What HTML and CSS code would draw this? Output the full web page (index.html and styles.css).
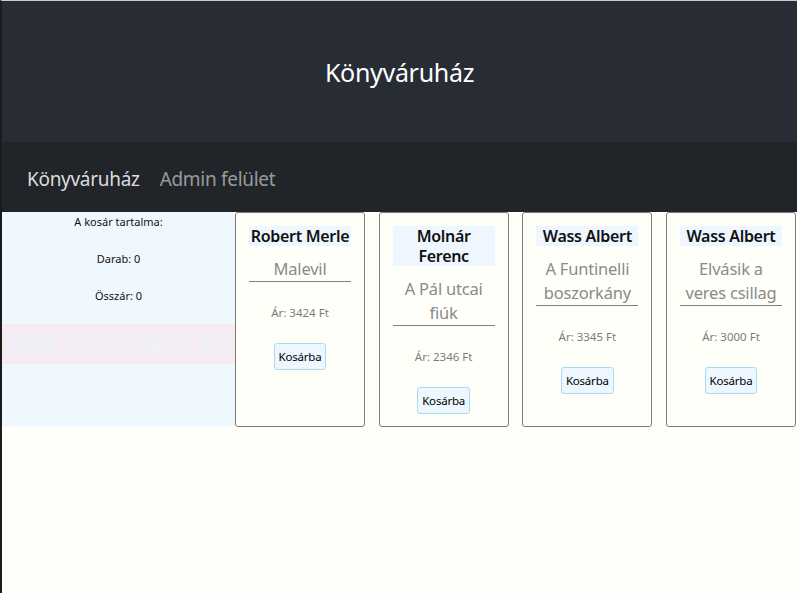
FILE: index.html
```html
<!DOCTYPE html>
<html lang="hu">
<head>
<meta charset="utf-8">
<title>Könyváruház</title>
<link rel="stylesheet" href="styles.css">
</head>
<body>
<div class="app">
  <header class="app-header"><h1 class="app-title">Könyváruház</h1></header>
  <nav class="navbar">
    <a class="nav-brand" href="#">Könyváruház</a>
    <a class="nav-link" href="#">Admin felület</a>
  </nav>
  <main class="shop">
    <aside class="cart">
      <div class="cart-line">A kosár tartalma:</div>
      <div class="cart-line">Darab: 0</div>
      <div class="cart-line">Összár: 0</div>
      <table class="cart-table">
        <tr>
          <th class="c1">Szerzők</th><th class="c2">Cím</th><th class="c3">Ár</th><th class="c4">Db</th><th class="c5"></th><th class="c6"></th><th class="c7"></th>
        </tr>
      </table>
    </aside>
    <section class="cards">
      <article class="card">
        <h3 class="author">Robert Merle</h3>
        <div class="title">Malevil</div>
        <p class="price">Ár: 3424 Ft</p>
        <button class="buy">Kosárba</button>
      </article>
      <article class="card">
        <h3 class="author">Molnár Ferenc</h3>
        <div class="title">A Pál utcai fiúk</div>
        <p class="price">Ár: 2346 Ft</p>
        <button class="buy">Kosárba</button>
      </article>
      <article class="card">
        <h3 class="author">Wass Albert</h3>
        <div class="title">A Funtinelli boszorkány</div>
        <p class="price">Ár: 3345 Ft</p>
        <button class="buy">Kosárba</button>
      </article>
      <article class="card">
        <h3 class="author">Wass Albert</h3>
        <div class="title">Elvásik a veres csillag</div>
        <p class="price">Ár: 3000 Ft</p>
        <button class="buy">Kosárba</button>
      </article>
    </section>
  </main>
</div>
</body>
</html>
```
FILE: styles.css
```css
html, body {
  margin: 0;
  padding: 0;
}
body {
  background: #fffffa;
  font-family: "Segoe UI", "Noto Sans", "Open Sans", sans-serif;
  border-top: 1px solid #c9c9c9;
  border-left: 2px solid #1c1a1a;
  min-height: 593px;
  box-sizing: border-box;
}
.app-header {
  background: #282c34;
  height: 141px;
  display: flex;
  align-items: center;
  justify-content: center;
}
.app-title {
  margin: 0;
  color: #fff;
  font-weight: 400;
  font-size: 25px;
  letter-spacing: -0.3px;
}
.navbar {
  background: #212529;
  height: 70px;
  box-sizing: border-box;
  padding-top: 3px;
  display: flex;
  align-items: center;
  padding-left: 25px;
  gap: 20px;
}
.nav-brand, .nav-link {
  text-decoration: none;
  font-size: 19px;
  letter-spacing: -0.3px;
}
.nav-brand { color: rgba(255,255,255,0.85); }
.nav-link { color: rgba(255,255,255,0.55); }
.shop {
  display: flex;
  align-items: stretch;
}
.cart {
  width: 233px;
  background: #f0f8ff;
  padding-top: 2px;
  height: 213px;
  flex: none;
}
.cart-line {
  font-size: 11px;
  line-height: 15px;
  text-align: center;
  color: #111;
  margin-bottom: 22px;
}
.cart-table {
  width: 100%;
  border-collapse: collapse;
  background: #f3eef5;
  margin-top: -1px;
}
.cart-table th {
  height: 36px;
  border: 2px solid #fce9ea;
  color: #eef6fb;
  font-weight: 400;
  font-size: 11px;
  padding: 0;
}
.c1 { width: 58px; }
.c2 { width: 38px; }
.c3 { width: 31px; }
.c4 { width: 33px; }
.c5 { width: 20px; }
.c6 { width: 19px; }
.cards {
  flex: 1;
  display: flex;
  gap: 13.7px;
  padding-right: 1px;
}
.card {
  flex: 1;
  border: 1px solid #7a7a7a;
  border-radius: 3px;
  padding: 13px 13px 0;
  text-align: center;
  min-width: 0;
}
.author {
  margin: 0;
  background: #eef7ff;
  font-size: 16px;
  line-height: 20px;
  font-weight: 600;
  color: #111;
  letter-spacing: -0.3px;
}
.title {
  margin-top: 11px;
  font-size: 16.5px;
  line-height: 24px;
  color: #8a8a8a;
  border-bottom: 1px solid #7f7f7f;
  letter-spacing: -0.2px;
}
.price {
  margin: 23px 0 22px;
  font-size: 11.5px;
  line-height: 16px;
  color: #7b7b7b;
}
.buy {
  font-family: inherit;
  font-size: 11.5px;
  color: #000;
  background: #eef7ff;
  border: 1px solid #a6dcef;
  border-radius: 3px;
  height: 27px;
  padding: 0 4px;
  letter-spacing: -0.2px;
}
```
